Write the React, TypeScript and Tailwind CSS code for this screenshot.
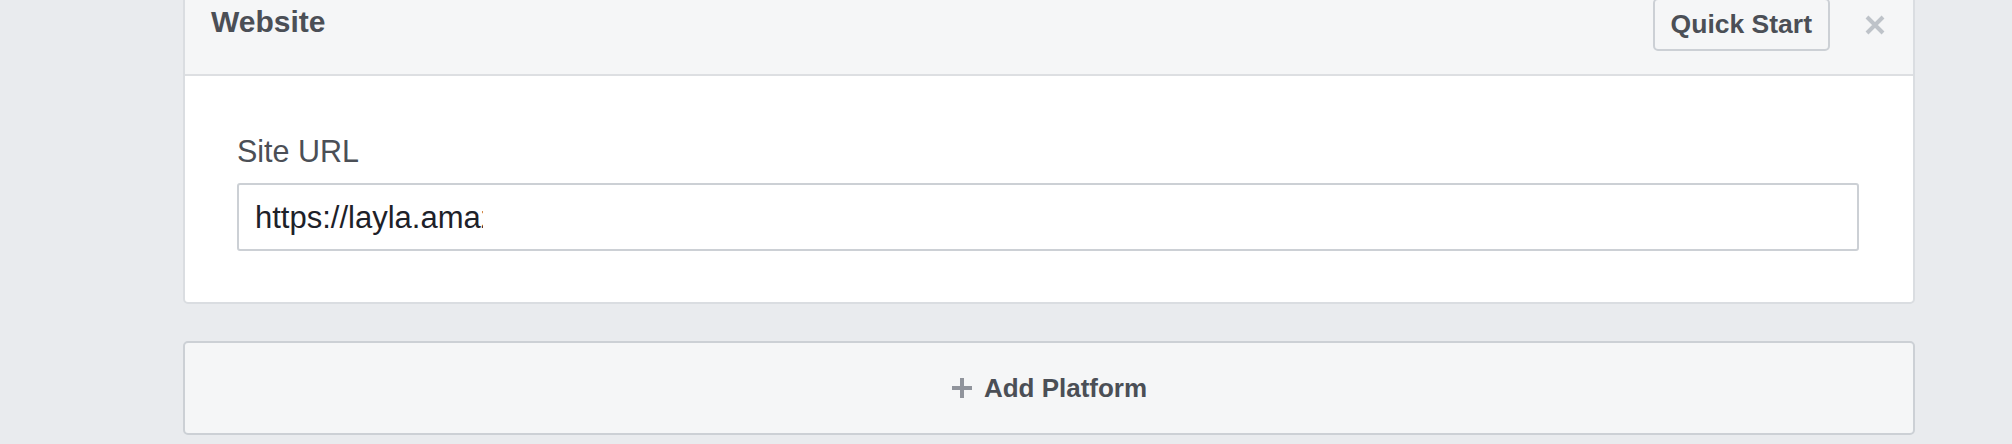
import React from 'react';

const FONT = "font-['Liberation_Sans',Arial,Helvetica,sans-serif]";

function CloseIcon() {
  return (
    <svg width="20" height="20" viewBox="0 0 20 20" aria-hidden="true">
      <path d="M2 2 L18 18 M18 2 L2 18" stroke="#bec3c9" strokeWidth="4" strokeLinecap="butt" />
    </svg>
  );
}

function PlusIcon() {
  return (
    <svg width="22" height="22" viewBox="0 0 22 22" aria-hidden="true">
      <path d="M11 1 V21 M1 11 H21" stroke="#90949c" strokeWidth="4" />
    </svg>
  );
}

export default function App() {
  return (
    <div className={`${FONT} h-[444px] w-full overflow-hidden bg-[#e9ebee]`}>
      <div className="w-[1915px] pl-[183px]">
        {/* Platform card */}
        <div className="-mt-[20px] rounded-[5px] border-2 border-[#dadde1] bg-white">
          <header className="flex h-[94px] items-start justify-between border-b-2 border-[#dddfe2] bg-[#f5f6f7] pl-[26px] pr-[28px]">
            <h2 className="mt-[25px] text-[30px] font-bold leading-[30px] text-[#4b4f56]">Website</h2>
            <div className="mt-[16px] flex items-center">
              <button className="h-[53px] rounded-[5px] border-2 border-[#ccd0d5] bg-[#f5f6f7] px-[16px] text-[26.5px] font-bold leading-none text-[#4b4f56]">
                Quick Start
              </button>
              <span className="ml-[35px] flex h-[20px] w-[20px] items-center justify-center">
                <CloseIcon />
              </span>
            </div>
          </header>

          <div className="pb-[51px] pl-[52px] pr-[54px] pt-[60px]">
            <label className="block text-[30.5px] leading-[31px] text-[#4b4f56]">Site URL</label>
            <div className="mt-[16px] flex h-[68px] items-center rounded-[3px] border-2 border-[#ccd0d5] bg-white pl-[16px]">
              <span className="inline-block w-[228px] overflow-hidden whitespace-nowrap pt-[1px] text-[31px] leading-[36px] text-[#1d2129]">
                https://layla.amazon.com
              </span>
            </div>
          </div>
        </div>

        {/* Add platform */}
        <button className="mt-[37px] flex h-[94px] w-full items-center justify-center gap-[11px] rounded-[5px] border-2 border-[#ccd0d5] bg-[#f5f6f7]">
          <PlusIcon />
          <span className="text-[26px] font-bold leading-none text-[#4b4f56]">Add Platform</span>
        </button>
      </div>
    </div>
  );
}
